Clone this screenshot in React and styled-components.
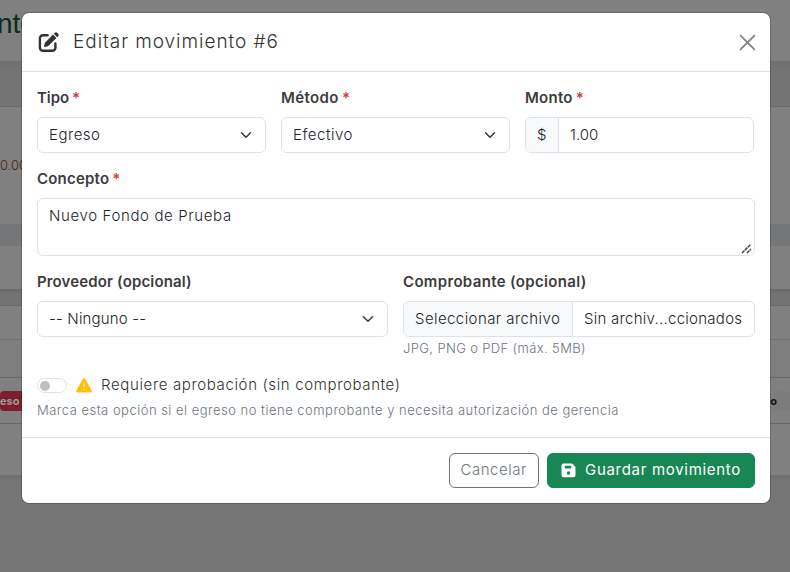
import React from "react";
import styled, { createGlobalStyle, css } from "styled-components";

const Global = createGlobalStyle`
  * { box-sizing: border-box; }
  body {
    margin: 0;
    background: #757575;
    font-family: Inter, "Open Sans", sans-serif;
    font-size: 15px;
    font-weight: 300;
    line-height: 22.5px;
    color: #212529;
  }
`;

const Screen = styled.div`
  display: grid;
  width: 790px;
  height: 572px;
  overflow: hidden;
`;

/* Dimmed page behind the dialog */
const Page = styled.div`
  grid-area: 1 / 1;
  display: flex;
  flex-direction: column;
  background: #757575;
`;

const Band = styled.div`
  display: flex;
  align-items: center;
  justify-content: space-between;
  flex: none;
  height: ${(p) => p.$h}px;
  background: ${(p) => p.$bg || "#808080"};
  ${(p) => p.$line && css`border-bottom: 1px solid ${p.$line};`}
`;

const PageTitle = styled.span`
  font: 400 28px/34px "Liberation Sans", Arial, sans-serif;
  color: #0d2b1d;
  margin: -13px 0 0 0;
  text-indent: -3px;
`;

const PageAmount = styled.span`
  font-size: 13px;
  font-weight: 300;
  color: #42260f;
`;

const Badge = styled.span`
  height: 20px;
  padding: 0 ${(p) => (p.$danger ? 8 : 13)}px 0 0;
  border-radius: 4px;
  font-size: 11px;
  font-weight: 700;
  line-height: 20px;
  color: ${(p) => (p.$danger ? "#999" : "#111")};
  background: ${(p) => (p.$danger ? "#7d1f2b" : "#7c7c7c")};
`;

const Dialog = styled.section`
  grid-area: 1 / 1;
  z-index: 1;
  display: flex;
  flex-direction: column;
  width: 750px;
  height: 492px;
  margin: 12px 0 0 21px;
  background: #fff;
  background-clip: padding-box;
  border: 1px solid rgba(0, 0, 0, 0.176);
  border-radius: 8px;
`;

const Header = styled.header`
  display: flex;
  align-items: center;
  height: 59px;
  padding: 0 14px 0 16px;
  border-bottom: 1px solid #dee2e6;
  color: #333;
`;

const Text = styled.span`
  letter-spacing: ${(p) => p.$ls || 0}px;
  white-space: nowrap;
`;

const Title = styled.h5`
  flex: 1;
  margin: 0 0 0 14px;
  font-size: 19px;
  font-weight: 300;
  letter-spacing: 0.95px;
`;

const CloseButton = styled.button`
  display: flex;
  padding: 0;
  border: 0;
  background: none;
  color: #808080;
`;

const Body = styled.div`
  display: flex;
  flex-direction: column;
  height: 365px;
  padding: 15px 15px 0;
`;

const Fields = styled.div`
  display: grid;
  grid-template-columns: ${(p) => p.$cols};
  column-gap: 15px;
  margin-bottom: ${(p) => p.$mb}px;
`;

const Field = styled.div`
  display: flex;
  flex-direction: column;
  min-width: 0;
`;

const Label = styled.label`
  height: 22px;
  margin-bottom: 8px;
  line-height: 21px;
  font-weight: 600;
  color: #3c3c3c;
  letter-spacing: ${(p) => p.$ls}px;
  white-space: nowrap;
`;

const Required = styled.span`
  margin-left: 3px;
  color: #dc3545;
`;

const controlFrame = css`
  border: 1px solid #dee2e6;
  border-radius: 6px;
  background: #fff;
`;

const Select = styled.div`
  ${controlFrame}
  display: flex;
  align-items: center;
  justify-content: space-between;
  height: 36px;
  padding: 0 13px 0 11px;
`;

const Group = styled.div`
  ${controlFrame}
  display: flex;
  height: 36px;
  overflow: hidden;
  line-height: 34px;
`;

const Addon = styled.span`
  padding: 0 11px;
  background: #f8f9fa;
  border-right: 1px solid #dee2e6;
  flex: none;
  width: ${(p) => p.$w}px;
`;

const Value = styled.span`
  padding: 0 11px;
  white-space: nowrap;
`;

const TextArea = styled.div`
  ${controlFrame}
  display: flex;
  justify-content: space-between;
  height: 58px;
  padding: 6px 2px 1px 11px;
`;

const Grip = styled.svg`
  align-self: flex-end;
`;

const Help = styled.small`
  height: 22px;
  font-size: 13px;
  line-height: ${(p) => p.$lh}px;
  color: #6c757d;
  white-space: nowrap;
  letter-spacing: ${(p) => p.$ls}px;
`;

const SwitchRow = styled.div`
  display: flex;
  align-items: center;
  height: 23px;
  color: #333;
`;

const Switch = styled.span`
  display: flex;
  align-items: center;
  width: 30px;
  height: 15px;
  padding-left: 2px;
  margin-right: 9px;
  border: 1px solid #dee2e6;
  border-radius: 8px;

  &::before {
    content: "";
    width: 10px;
    height: 10px;
    border-radius: 50%;
    background: #bfbfbf;
  }
`;

const SwitchText = styled(Text)`
  margin-left: 9px;
`;

const Footer = styled.footer`
  display: flex;
  align-items: center;
  justify-content: flex-end;
  gap: 8px;
  height: 66px;
  padding: 0 15px;
  border-top: 1px solid #dee2e6;
`;

const Button = styled.button`
  display: flex;
  align-items: center;
  gap: 9px;
  width: ${(p) => p.$w}px;
  height: 35px;
  padding: 0 0 1px ${(p) => (p.$primary ? 13 : 10.5)}px;
  border: 1px solid ${(p) => (p.$primary ? "#198754" : "#6c757d")};
  border-radius: 6px;
  background: ${(p) => (p.$primary ? "#198754" : "#fff")};
  color: ${(p) => (p.$primary ? "#fff" : "#6c757d")};
  font: inherit;
  font-weight: ${(p) => (p.$primary ? 400 : 300)};
`;

const Chevron = () => (
  <svg width="12" height="12" viewBox="0 0 16 16" fill="none" stroke="#343a40" strokeWidth="2" strokeLinecap="round" strokeLinejoin="round">
    <path d="m2 5 6 6 6-6" />
  </svg>
);

const EditIcon = () => (
  <svg width="21" height="21" viewBox="0 0 21 21">
    <path d="M9.6 3.3H5A3.1 3.1 0 0 0 1.9 6.4v9.3A3.1 3.1 0 0 0 5 18.8h9.3a3.1 3.1 0 0 0 3.1-3.1v-4.2" fill="none" stroke="#333" strokeWidth="2.4" strokeLinecap="round" />
    <path d="m15 2.6 3.4 3.4-7.6 7.6c-.3.3-.7.5-1.1.6l-3 .8c-.5.1-.8-.3-.7-.7l.8-3c.1-.4.3-.8.6-1.1z" fill="#333" />
    <path d="m15.8 1.8.8-.8a2 2 0 0 1 2.8 0l.6.6a2 2 0 0 1 0 2.8l-.8.8z" fill="#333" />
  </svg>
);

const CloseIcon = () => (
  <svg width="17" height="17" viewBox="0 0 17 17" stroke="currentColor" strokeWidth="1.7" strokeLinecap="round">
    <path d="m1.6 1.6 13.8 13.8M15.4 1.6 1.6 15.4" />
  </svg>
);

const WarningIcon = () => (
  <svg width="16" height="15" viewBox="0 0 16 15">
    <path d="M6.9.7a1.3 1.3 0 0 1 2.2 0l6.6 11.7c.5.9-.1 2-1.1 2H1.4c-1 0-1.6-1.1-1.1-2z" fill="#ffc107" />
    <path d="M8 5v3.7" stroke="#fff" strokeWidth="1.1" strokeLinecap="round" opacity=".85" />
    <circle cx="8" cy="11.3" r=".75" fill="#fff" opacity=".85" />
  </svg>
);

const SaveIcon = () => (
  <svg width="15" height="15" viewBox="0 0 15 15">
    <path fillRule="evenodd" fill="#fff" d="M2.2.5h8.2c.5 0 1 .2 1.4.6l2.1 2.1c.4.4.6.9.6 1.4v7.7a2 2 0 0 1-2 2H2.5a2 2 0 0 1-2-2V2.5a2 2 0 0 1 1.7-2zM4.3 2.8a.5.5 0 0 0-.5.5v1.8c0 .3.2.5.5.5h5.4c.3 0 .5-.2.5-.5V3.300a.5.5 0 0 0-.5-.5zM7.500 8.300a1.700 1.700 0 1 0 0 3.400 1.700 1.700 0 0 0 0-3.400z" />
  </svg>
);

export default function App() {
  return (
    <Screen>
      <Global />
      <Page>
        <Band $h={61}><PageTitle>nto</PageTitle></Band>
        <Band $h={9} $bg="linear-gradient(#707070, #747474)" />
        <Band $h={37} $bg="#747474" $line="#696969" />
        <Band $h={117}><PageAmount>0.00</PageAmount></Band>
        <Band $h={22} $bg="#747678" />
        <Band $h={43} />
        <Band $h={17} $bg="linear-gradient(#696969, #737373 5px)" $line="#696969" />
        <Band $h={34} $line="#707070" />
        <Band $h={38} $bg="#7e7e7e" $line="#686868" />
        <Band $h={46} $line="#686868">
          <Badge $danger>eso</Badge>
          <Badge>o</Badge>
        </Band>
        <Band $h={51} />
        <Band $h={5} $bg="linear-gradient(#6d6d6d, #757575)" />
      </Page>
      <Dialog>
        <Header>
          <EditIcon />
          <Title>Editar movimiento #6</Title>
          <CloseButton aria-label="Cerrar"><CloseIcon /></CloseButton>
        </Header>
        <Body>
          <Fields $cols="229px 229px 229px" $mb={15}>
            <Field>
              <Label $ls={-0.1}>Tipo<Required>*</Required></Label>
              <Select><Text $ls={0.51}>Egreso</Text><Chevron /></Select>
            </Field>
            <Field>
              <Label $ls={0.4}>Método<Required>*</Required></Label>
              <Select><Text $ls={0.54}>Efectivo</Text><Chevron /></Select>
            </Field>
            <Field>
              <Label $ls={0.27}>Monto<Required>*</Required></Label>
              <Group><Addon $w={33}>$</Addon><Value>1.00</Value></Group>
            </Field>
          </Fields>
          <Fields $cols="1fr" $mb={15}>
            <Field>
              <Label $ls={0.2}>Concepto<Required>*</Required></Label>
              <TextArea>
                <Text $ls={0.63}>Nuevo Fondo de Prueba</Text>
                <Grip width="11" height="11" viewBox="0 0 11 11" stroke="#444" strokeWidth="1.5">
                  <path d="M1 10 9.500 1.500M6 10l4-4" strokeDasharray="3.500 .6" />
                </Grip>
              </TextArea>
            </Field>
          </Fields>
          <Fields $cols="351px 352px" $mb={15}>
            <Field>
              <Label $ls={0.14}>Proveedor (opcional)</Label>
              <Select><Text $ls={0.18}>-- Ninguno --</Text><Chevron /></Select>
            </Field>
            <Field>
              <Label $ls={0.34}>Comprobante (opcional)</Label>
              <Group>
                <Addon $w={169}><Text $ls={0.42}>Seleccionar archivo</Text></Addon>
                <Value><Text $ls={0.27}>Sin archiv...ccionados</Text></Value>
              </Group>
              <Help $lh={23} $ls={0.37}>JPG, PNG o PDF (máx. 5MB)</Help>
            </Field>
          </Fields>
          <SwitchRow>
            <Switch />
            <WarningIcon />
            <SwitchText $ls={0.64}>Requiere aprobación (sin comprobante)</SwitchText>
          </SwitchRow>
          <Help $lh={26} $ls={0.49}>Marca esta opción si el egreso no tiene comprobante y necesita autorización de gerencia</Help>
        </Body>
        <Footer>
          <Button $w={90}><Text $ls={0.54}>Cancelar</Text></Button>
          <Button $primary $w={208}><SaveIcon /><Text $ls={0.7}>Guardar movimiento</Text></Button>
        </Footer>
      </Dialog>
    </Screen>
  );
}
